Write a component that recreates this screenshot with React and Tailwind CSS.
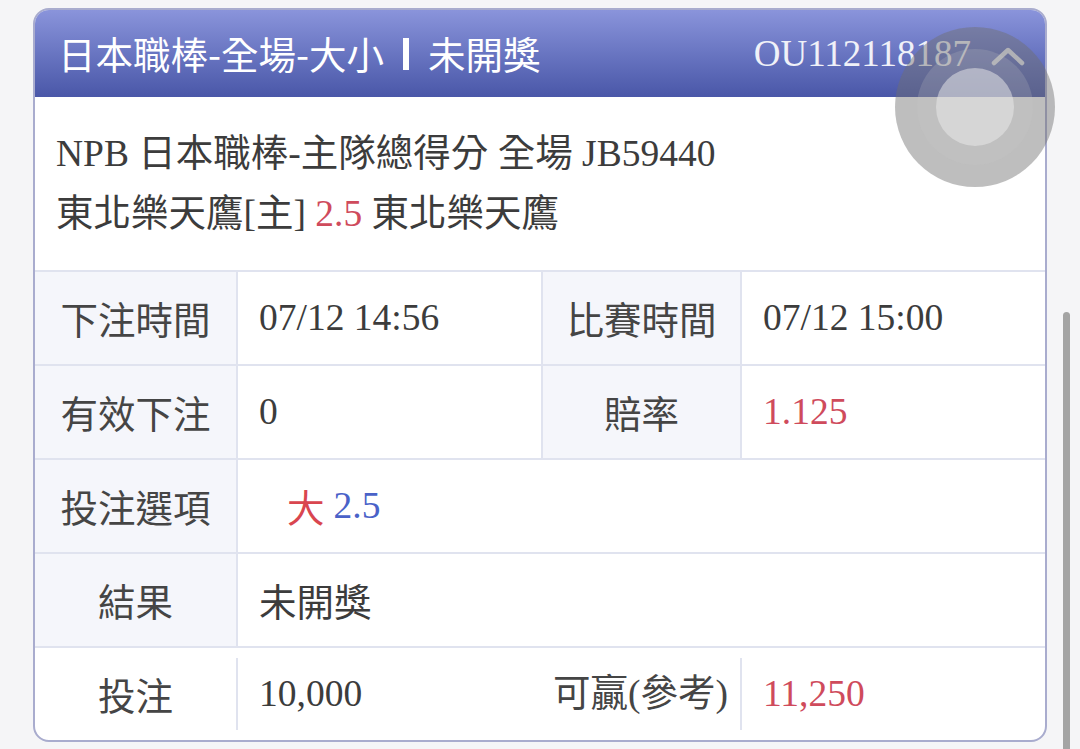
import React from "react";

const serif = "font-['Liberation_Serif','Noto_Sans_CJK_TC',serif]";
const sans = "font-['Noto_Sans_CJK_TC','Noto_Sans',sans-serif]";

export default function App() {
  return (
    <div className="relative w-[1080px] h-[749px] bg-[#f5f5f7] overflow-hidden pl-[33px] pt-[8px]">
      <div className="w-[1014px] rounded-[16px] border-2 border-[#a9acce] bg-white overflow-hidden flex flex-col">
        {/* header */}
        <div className="h-[87px] flex items-center justify-between pl-[23px] pr-[20px] bg-gradient-to-b from-[#8a94db] to-[#4a57a8] text-white">
          <div className={`text-[37.5px] flex items-center gap-[19px] ${sans}`}>
            <span>日本職棒-全場-大小</span>
            <span className="inline-block w-[6px] h-[32px] bg-white"></span>
            <span>未開獎</span>
          </div>
          <div className="flex items-center gap-[20px]">
            <span className={`text-[37px] text-[#f0f1f8] ${serif}`}>OU112118187</span>
            <svg width="34" height="20" viewBox="0 0 34 20" className="mt-[4px]">
              <polyline points="3,17 17,4 31,17" fill="none" stroke="#e6e7f1" strokeWidth="4.5" strokeLinecap="round" strokeLinejoin="round" />
            </svg>
          </div>
        </div>

        {/* info */}
        <div className={`h-[173px] flex flex-col justify-center pl-[21px] text-[37.5px] leading-[60px] text-[#3c3c3c] ${serif}`}>
          <div>NPB 日本職棒-主隊總得分 全場 JB59440</div>
          <div>
            東北樂天鷹[主] <span className="text-[#cf4b5c]">2.5</span> 東北樂天鷹
          </div>
        </div>

        {/* table */}
        <div className="grid grid-cols-[201px_305px_199px_305px] auto-rows-[94px] text-[37.5px]">
          <div className={`flex items-center justify-center bg-[#f5f6fb] border-t-2 border-[#e0e3ef] text-[#454545] ${sans}`}>下注時間</div>
          <div className={`flex items-center pl-[21px] border-t-2 border-l-2 border-[#e0e3ef] text-[#3c3c3c] ${serif}`}>07/12 14:56</div>
          <div className={`flex items-center justify-center bg-[#f5f6fb] border-t-2 border-l-2 border-[#e0e3ef] text-[#454545] ${sans}`}>比賽時間</div>
          <div className={`flex items-center pl-[21px] border-t-2 border-l-2 border-[#e0e3ef] text-[#3c3c3c] ${serif}`}>07/12 15:00</div>

          <div className={`flex items-center justify-center bg-[#f5f6fb] border-t-2 border-[#e0e3ef] text-[#454545] ${sans}`}>有效下注</div>
          <div className={`flex items-center pl-[21px] border-t-2 border-l-2 border-[#e0e3ef] text-[#3c3c3c] ${serif}`}>0</div>
          <div className={`flex items-center justify-center bg-[#f5f6fb] border-t-2 border-l-2 border-[#e0e3ef] text-[#454545] ${sans}`}>賠率</div>
          <div className={`flex items-center pl-[21px] border-t-2 border-l-2 border-[#e0e3ef] text-[#cf4b5c] ${serif}`}>1.125</div>

          <div className={`flex items-center justify-center bg-[#f5f6fb] border-t-2 border-[#e0e3ef] text-[#454545] ${sans}`}>投注選項</div>
          <div className={`col-span-3 flex items-center pl-[49px] border-t-2 border-l-2 border-[#e0e3ef] ${serif}`}>
            <span className={`text-[#d9464f] ${sans}`}>大</span>
            <span className="ml-[9px] text-[#4a62c8]">2.5</span>
          </div>

          <div className={`flex items-center justify-center bg-[#f5f6fb] border-t-2 border-[#e0e3ef] text-[#454545] ${sans}`}>結果</div>
          <div className={`col-span-3 flex items-center pl-[21px] border-t-2 border-l-2 border-[#e0e3ef] text-[#3c3c3c] ${sans}`}>未開獎</div>

          <div className={`flex items-center justify-center border-t-2 border-[#e0e3ef] text-[#454545] ${sans}`}>投注</div>
          <div className="flex items-center border-t-2 border-[#e0e3ef] py-[10px]">
            <div className={`h-full w-full flex items-center pl-[21px] border-l-2 border-[#e0e3ef] text-[#3c3c3c] ${serif}`}>10,000</div>
          </div>
          <div className={`flex items-center justify-center border-t-2 border-[#e0e3ef] text-[#454545] ${serif}`}>可贏(參考)</div>
          <div className="flex items-center border-t-2 border-[#e0e3ef] py-[10px]">
            <div className={`h-full w-full flex items-center pl-[21px] border-l-2 border-[#e0e3ef] text-[#cf4b5c] ${serif}`}>11,250</div>
          </div>
        </div>
      </div>

      {/* touch indicator overlay */}
      <div className="absolute left-[895px] top-[27px] w-[160px] h-[160px] rounded-full bg-[rgba(110,110,110,0.45)] flex items-center justify-center">
        <div className="w-[116px] h-[116px] rounded-full bg-[rgba(200,200,200,0.2)] flex items-center justify-center">
          <div className="w-[78px] h-[78px] rounded-full bg-[rgba(235,235,235,0.5)]"></div>
        </div>
      </div>

      {/* scrollbar */}
      <div className="absolute left-[1063px] top-[312px] w-[7px] h-[460px] rounded-full bg-[#a4a4a4]"></div>
    </div>
  );
}
